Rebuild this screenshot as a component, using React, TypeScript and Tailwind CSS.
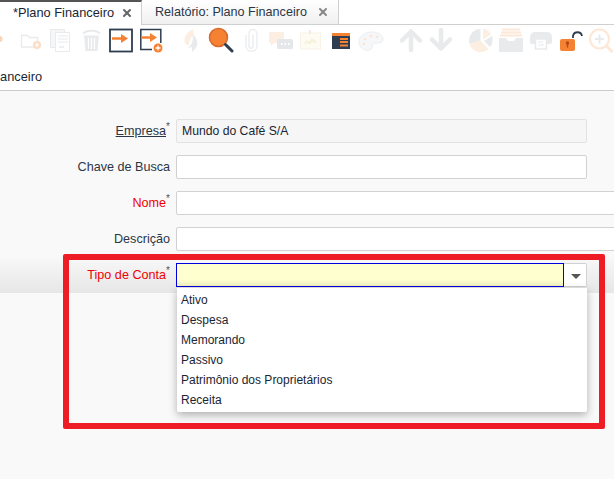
import React from 'react';
import { X } from 'lucide-react';

const GRAY = '#e8eaec';
const PEACH = '#fdeee2';
const DARK = '#2f3d50';
const ORANGE = '#f58233';

function Icon({ children }: { children: React.ReactNode }) {
  return (
    <div className="w-[30px] h-[26px] flex items-center justify-center shrink-0">
      <svg width="26" height="26" viewBox="0 0 26 26" fill="none">
        {children}
      </svg>
    </div>
  );
}

function Sep() {
  return <div className="w-[10px] shrink-0" />;
}

function Toolbar() {
  return (
    <div className="h-[34px] flex items-center ml-[-14px] pb-[4px]">
      <Icon><circle cx="11.500" cy="12" r="3" fill="#fbd3b5" /></Icon>
      {/* new folder */}
      <Icon>
        <path d="M3.500 8.500h6l2 2h8v9.500h-16z" stroke={GRAY} strokeWidth="1.300" fill="#fff" />
        <circle cx="19" cy="18" r="4" fill="#fbdcc5" />
        <path d="M19 16v4M17 18h4" stroke="#fff" strokeWidth="1.200" />
      </Icon>
      {/* copy */}
      <Icon>
        <path d="M2.500 2.500h14v18h-14z" fill="#f5f6f7" stroke={GRAY} />
        <path d="M7.500 5.500h14v19h-14z" fill="#fff" stroke={GRAY} />
        <path d="M10 9h10M10 12h10M10 15h10" stroke={GRAY} strokeWidth="1.200" />
        <path d="M11 20h5" stroke={GRAY} strokeWidth="1.500" />
      </Icon>
      {/* trash */}
      <Icon>
        <path d="M5.500 7c1-4.500 15-4.500 16 0" stroke={GRAY} strokeWidth="2" />
        <path d="M6 8.500h15l-1.500 15.500h-12z" fill={GRAY} />
        <path d="M10.500 11v11M13.500 11v11M16.500 11v11" stroke="#fff" strokeWidth="1.200" />
      </Icon>
      {/* open record */}
      <Icon>
        <rect x="2" y="2.500" width="22" height="22" stroke={DARK} strokeWidth="1.800" fill="#fff" />
        <path d="M4 11.500h10" stroke={ORANGE} strokeWidth="2.500" />
        <path d="M13 7l7 4.500-7 4.500z" fill={ORANGE} />
      </Icon>
      <Icon>
        <path d="M22.800 16V2.500H2.800v20H14" stroke={DARK} strokeWidth="1.500" fill="#fff" />
        <path d="M3 10.500h10" stroke={ORANGE} strokeWidth="2.500" />
        <path d="M12 6l7 4.500-7 4.500z" fill={ORANGE} />
        <circle cx="20" cy="21" r="4.500" fill={ORANGE} />
        <path d="M20 18.500v5M17.500 21h5" stroke="#fff" strokeWidth="1.300" />
      </Icon>
      <Sep />
      {/* refresh */}
      <Icon>
        <path d="M15 2C9 5 5 10 7 16l3 3 3-9h3z" fill={PEACH} />
        <path d="M15 8c6 4 6 12-1 17v-5l-4 1c4-3 5-7 5-13z" fill="#e8eaec" />
      </Icon>
      {/* find */}
      <Icon>
        <circle cx="10.500" cy="10.500" r="9" fill={ORANGE} stroke="#d9682a" strokeWidth="1.500" />
        <path d="M17.500 17.500l6.500 6.500" stroke={DARK} strokeWidth="3" strokeLinecap="round" />
      </Icon>
      {/* attachment */}
      <Icon>
        <path d="M8 8v11c0 7 11 7 11 0V7c0-6-8-6-8 0v12c0 3 4 3 4 0V8" stroke={GRAY} strokeWidth="1.200" />
      </Icon>
      {/* chat */}
      <Icon>
        <path d="M1 5h15v11H6l-3 3v-3H1z" fill={PEACH} />
        <rect x="9" y="12" width="16" height="10" rx="1.500" fill="#e5e7ea" />
        <path d="M13 17h1.500M16.500 17H18M20 17h1.500" stroke="#fff" strokeWidth="2" />
      </Icon>
      {/* note */}
      <Icon>
        <rect x="2.500" y="6" width="20" height="16" fill="#fefbf3" stroke="#f8f3e8" />
        <path d="M12 3v4" stroke="#fbe5df" strokeWidth="2" />
        <path d="M7 17c2-5 3-2 4-1s3-5 4-3 1 3 3 1" stroke="#f6f1d8" strokeWidth="2" />
      </Icon>
      {/* panel */}
      <Icon>
        <rect x="4" y="6" width="18" height="16" fill={DARK} />
        <path d="M4 7.500h18" stroke={ORANGE} strokeWidth="3" />
        <path d="M12 12h8M12 15h8M12 18.500h8" stroke={ORANGE} strokeWidth="2" />
      </Icon>
      {/* palette */}
      <Icon>
        <path d="M1 15C1 8 8 5 14 5s11 3 11 7-5 4-8 4-2 3-3 5-4 3-7 2-6-4-6-8z" fill="#f6f7f8" stroke="#eceef0" />
        <circle cx="7" cy="12" r="1.300" fill="#fde3d0" />
        <circle cx="13" cy="9" r="1.300" fill="#fde3d0" />
        <circle cx="19" cy="10" r="1.300" fill="#fde3d0" />
        <circle cx="6" cy="17" r="1.300" fill="#fde3d0" />
      </Icon>
      <Sep />
      <Icon>
        <path d="M13 23V5M4 13.500L13 4.500l9 9" stroke={GRAY} strokeWidth="4.500" strokeLinecap="round" strokeLinejoin="round" />
      </Icon>
      <Icon>
        <path d="M13 3v18M4 12.500l9 9 9-9" stroke={GRAY} strokeWidth="4.500" strokeLinecap="round" strokeLinejoin="round" />
      </Icon>
      <Sep />
      {/* pie */}
      <Icon>
        <path d="M12.500 13.500V2A11.500 11.500 0 0 0 1.600 17z" fill="#e7e9eb" />
        <path d="M12.500 13.500L1.600 17A11.500 11.500 0 0 0 20.500 22z" fill={PEACH} />
        <path d="M15 1.500A11.500 11.500 0 0 1 23 7.500l-8 5z" fill={PEACH} />
        <path d="M16 14l8-5a11.500 11.500 0 0 1-2 11z" fill="#e7e9eb" />
      </Icon>
      {/* archive */}
      <Icon>
        <path d="M4 2.500h18M3 5.500h20M2 8.500h22" stroke="#fde7d6" strokeWidth="1.800" />
        <path d="M1 11h7l2 3h6l2-3h7v14H1z" fill={GRAY} />
      </Icon>
      {/* print */}
      <Icon>
        <path d="M7 5h12c3 0 5 2 5 6H2c0-4 2-6 5-6z" fill={GRAY} />
        <rect x="2" y="10" width="22" height="7" rx="2" fill={GRAY} />
        <path d="M7.500 12h11v10h-11z" fill="#fff" stroke={GRAY} strokeWidth="1.500" />
        <path d="M10 15h5M10 18h6" stroke={GRAY} />
      </Icon>
      {/* lock */}
      <Icon>
        <path d="M15 11V9c1-5 8-5 9 0" stroke={DARK} strokeWidth="1.800" />
        <rect x="2" y="12" width="15" height="12" rx="2" fill={ORANGE} />
        <circle cx="9.500" cy="16" r="1.700" fill="#b3471a" />
        <path d="M9.500 16v4.500" stroke="#b3471a" strokeWidth="1.400" />
      </Icon>
      {/* zoom */}
      <Icon>
        <circle cx="11.500" cy="12" r="9.500" stroke="#fde7d6" strokeWidth="2.200" fill="#fff" />
        <path d="M7 12h9M11.500 7.500v9" stroke={GRAY} strokeWidth="2" />
        <path d="M18.500 19l6 6" stroke="#fde7d6" strokeWidth="3" />
      </Icon>
    </div>
  );
}

type RowProps = {
  label: string;
  required?: boolean;
  red?: boolean;
  underline?: boolean;
  children: React.ReactNode;
  className?: string;
};

function Row({ label, required, red, underline, children, className }: RowProps) {
  return (
    <div className={`h-[36px] flex items-center ${className ?? ''}`}>
      <div className="w-[170px] shrink-0 flex justify-end">
        <span className={`text-[12.6px] leading-none ${red ? 'text-[#f00000]' : 'text-[#2b3646]'} ${underline ? 'underline' : ''}`}>
          {label}
        </span>
        {required && <span className="text-[10px] leading-none text-[#555] w-[4px] mt-[-3px]">*</span>}
      </div>
      <div className="ml-[6px] flex items-center">{children}</div>
    </div>
  );
}

const inputClass = 'h-[24px] bg-white border border-[#d2d2d2] rounded-[2px] shrink-0';

export default function App() {
  const options = ['Ativo', 'Despesa', 'Memorando', 'Passivo', 'Patrimônio dos Proprietários', 'Receita'];
  return (
    <div className="relative w-[614px] h-[479px] overflow-hidden bg-[#f9f9f9] font-['Liberation_Sans',Arial,sans-serif] text-[12.8px]">
      <div className="bg-white">
        {/* tabs */}
        <div className="h-[25px] flex border-b border-[#cfcfcf]">
          <div className="w-[142px] h-[25px] shrink-0 flex items-center pl-[13px] pb-[2px] bg-white border-t-2 border-r border-t-[#555] border-r-[#cfcfcf] text-[#1a2533] z-10">
            <span>*Plano Financeiro</span>
            <X size={12} strokeWidth={4} className="ml-[7px] text-[#666]" />
          </div>
          <div className="w-[197px] h-[24px] shrink-0 flex items-center pl-[13px] bg-gradient-to-b from-white to-[#f0f0f0] border-r border-[#cfcfcf] text-[12.6px] text-[#2b3646]">
            <span>Relatório: Plano Financeiro</span>
            <X size={12} strokeWidth={4} className="ml-[10px] text-[#888]" />
          </div>
        </div>
        <Toolbar />
        {/* breadcrumb title */}
        <div className="h-[32px] border-b border-[#cccccc] overflow-hidden">
          <div className="ml-[-54px] pt-[8px] whitespace-nowrap text-[#1a2533]">Plano Financeiro</div>
        </div>
      </div>

      {/* form */}
      <div className="pt-[22px]">
        <Row label="Empresa" required underline>
          <div className="h-[24px] w-[411px] shrink-0 bg-[#f6f6f6] border border-[#e2e2e2] rounded-[2px] flex items-center px-[5px] text-[#1a2533] text-[12.2px]">Mundo do Café S/A</div>
        </Row>
        <Row label="Chave de Busca">
          <div className={`${inputClass} w-[411px]`} />
        </Row>
        <Row label="Nome" required red>
          <div className={`${inputClass} w-[460px]`} />
        </Row>
        <Row label="Descrição">
          <div className={`${inputClass} w-[460px]`} />
        </Row>
        <Row label="Tipo de Conta" required red className="bg-gradient-to-b from-[#f8f8f8] to-[#e6e6e6]">
          <div className="w-[388px] h-[24px] bg-gradient-to-b from-[#ffffd0] from-70% to-[#f0f0c0] border border-[#0000e0]" />
          <div className="w-[23px] h-[24px] pt-[3px] pl-[1px] bg-white border border-l-0 border-[#d2d2d2] rounded-r-[2px] flex items-center justify-center">
            <div className="w-0 h-0 border-x-[5px] border-x-transparent border-t-[5px] border-t-[#555]" />
          </div>
        </Row>
      </div>

      {/* dropdown list */}
      <div className="absolute left-[177px] top-[288px] w-[410px] h-[124px] bg-white rounded-b-[2px] shadow-[0_3px_8px_rgba(0,0,0,0.3)] py-[2px]">
        {options.map((o) => (
          <div key={o} className="h-[20px] flex items-center pl-[4px] text-[12px] text-[#1a2533]">{o}</div>
        ))}
      </div>

      {/* red annotation frame */}
      <div className="absolute left-[63px] top-[254px] w-[542px] h-[175px] border-[6px] border-[#ee1c25] rounded-[2px]" />
    </div>
  );
}
